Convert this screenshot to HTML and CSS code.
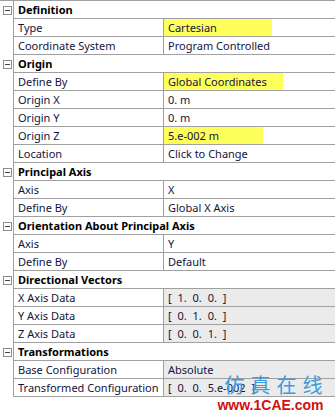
FILE: index.html
```html
<!DOCTYPE html>
<html lang="en">
<head>
    <meta charset="UTF-8">
    <title>Coordinate System Details</title>
    <link rel="stylesheet" href="styles.css">
</head>
<body>
    <div class="details">
        <div class="group">
            <div class="head"><span class="toggle"></span><div class="title">Definition</div></div>
            <div class="row"><div class="name">Type</div><div class="value"><span class="hl hl-type">Cartesian</span></div></div>
            <div class="row"><div class="name">Coordinate System</div><div class="value">Program Controlled</div></div>
        </div>
        <div class="group">
            <div class="head"><span class="toggle"></span><div class="title">Origin</div></div>
            <div class="row"><div class="name">Define By</div><div class="value"><span class="hl hl-define">Global Coordinates</span></div></div>
            <div class="row"><div class="name">Origin X</div><div class="value">0. m</div></div>
            <div class="row"><div class="name">Origin Y</div><div class="value">0. m</div></div>
            <div class="row"><div class="name">Origin Z</div><div class="value"><span class="hl hl-z">5.e-002 m</span></div></div>
            <div class="row"><div class="name">Location</div><div class="value">Click to Change</div></div>
        </div>
        <div class="group">
            <div class="head"><span class="toggle"></span><div class="title">Principal Axis</div></div>
            <div class="row"><div class="name">Axis</div><div class="value">X</div></div>
            <div class="row"><div class="name">Define By</div><div class="value">Global X Axis</div></div>
        </div>
        <div class="group">
            <div class="head"><span class="toggle"></span><div class="title">Orientation About Principal Axis</div></div>
            <div class="row"><div class="name">Axis</div><div class="value">Y</div></div>
            <div class="row"><div class="name">Define By</div><div class="value">Default</div></div>
        </div>
        <div class="group">
            <div class="head"><span class="toggle"></span><div class="title">Directional Vectors</div></div>
            <div class="row"><div class="name">X Axis Data</div><div class="value readonly">[ 1. 0. 0. ]</div></div>
            <div class="row"><div class="name">Y Axis Data</div><div class="value readonly">[ 0. 1. 0. ]</div></div>
            <div class="row"><div class="name">Z Axis Data</div><div class="value readonly">[ 0. 0. 1. ]</div></div>
        </div>
        <div class="group">
            <div class="head"><span class="toggle"></span><div class="title">Transformations</div></div>
            <div class="row"><div class="name">Base Configuration</div><div class="value readonly">Absolute</div></div>
            <div class="row"><div class="name">Transformed Configuration</div><div class="value readonly">[ 0. 0. 5.e-002 ]</div></div>
        </div>
    </div>

    <!-- site watermark -->
    <div class="stamp">
        <div class="stamp-cn">仿真在线</div>
        <div class="stamp-url">www.1CAE.com</div>
    </div>
</body>
</html>
```

FILE: styles.css
```css
body {
    margin: 0;
    background: #fff;
    font-family: "Noto Sans", "DejaVu Sans", sans-serif;
    font-size: 11px;
    color: #14143c;
    width: 335px;
    height: 413px;
    overflow: hidden;
    position: relative;
}
.details {
    border-top: 1px solid #a0a0a0;
}
.head, .row {
    display: flex;
    height: 18px;
    line-height: 17px;
}
.head .title {
    flex: 1;
    border-left: 1px solid #a0a0a0;
    border-bottom: 1px solid #a0a0a0;
    padding-left: 4px;
    font-weight: bold;
    color: #000;
    white-space: nowrap;
}
.toggle {
    width: 13px;
    flex: none;
    display: flex;
    align-items: center;
    justify-content: flex-start;
}
.toggle::before {
    content: "";
    display: block;
    width: 7px;
    height: 7px;
    margin-left: 3px;
    border: 1px solid #8c8c8c;
    background: linear-gradient(#404040, #404040) center / 5px 1px no-repeat, #fff;
}
.row {
    padding-left: 13px;
}
.name {
    width: 145px;
    flex: none;
    padding-left: 4px;
    border-left: 1px solid #a0a0a0;
    border-right: 1px solid #a0a0a0;
    border-bottom: 1px solid #a0a0a0;
    white-space: nowrap;
    overflow: hidden;
}
.value {
    flex: 1;
    padding-left: 4px;
    border-bottom: 1px solid #a0a0a0;
    white-space: nowrap;
}
.value.readonly {
    background: #ebebeb;
    word-spacing: 3px;
}
.hl {
    display: block;
    margin-left: -4px;
    padding-left: 4px;
    height: 17px;
    background: #ffff5c;
}
.hl-type { width: 104px; }
.hl-define { width: 115px; }
.hl-z { width: 95px; }
.stamp {
    position: absolute;
    left: 208px;
    top: 373px;
    width: 125px;
    text-align: center;
    white-space: nowrap;
}
.stamp-cn {
    font-family: "Noto Sans CJK SC", sans-serif;
    font-size: 20px;
    line-height: 24px;
    letter-spacing: 6px;
    padding-left: 12px;
    color: #3a9be0;
}
.stamp-url {
    font-family: "Liberation Sans", Arial, sans-serif;
    font-weight: bold;
    font-size: 14px;
    line-height: 16px;
    color: #d01010;
}
```
